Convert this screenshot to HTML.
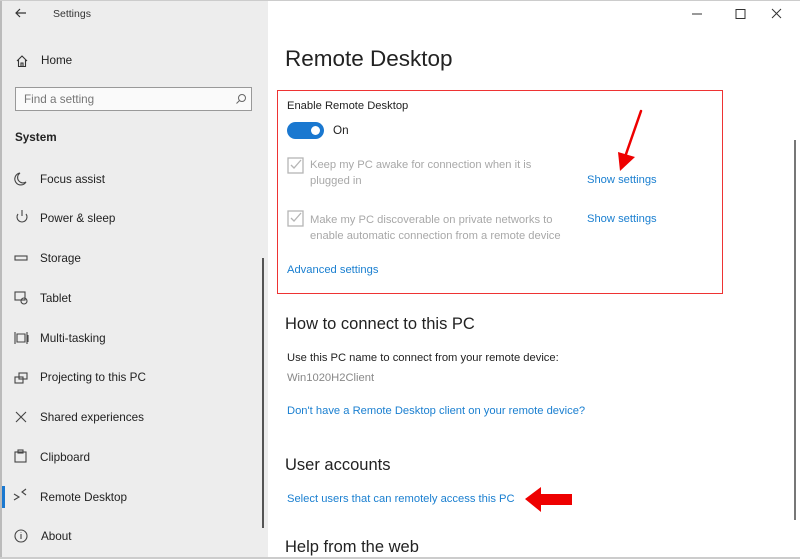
<!DOCTYPE html><html><head><style>
body{margin:0;width:800px;height:559px;overflow:hidden;background:#fff;font-family:"Liberation Sans",sans-serif;position:relative}
.a{position:absolute;white-space:nowrap}
#side{position:absolute;left:0;top:0;width:268px;height:559px;background:#ededed;border-left:2px solid #bbb;box-sizing:border-box}
.nav{font-size:11.7px;color:#222}
.blue{color:#1a7fd0;font-size:11.2px}
.grey{color:#a8a8a8;font-size:11.2px;line-height:16px}
.h{font-size:16.5px;color:#222}
svg{position:absolute}
</style></head><body>
<div id="side"></div>
<div style="position:absolute;left:0;top:0;width:800px;height:1px;background:#ccc"></div>
<div style="position:absolute;left:0;top:557px;width:800px;height:2px;background:#ccc"></div>
<svg style="left:14px;top:7px" width="14" height="12"><path d="M12 6H2M6 2L2 6l4 4" stroke="#333" fill="none" stroke-width="1.2"/></svg>
<div class="a" style="left:53px;top:8px;font-size:10.5px;color:#333">Settings</div>
<svg style="left:15px;top:54px" width="14" height="14"><path d="M2 7L7 2l5 5M3.5 6v6.5h7V6M6 12.5V9h2v3.5" stroke="#333" fill="none" stroke-width="1.1"/></svg>
<div class="a nav" style="left:41px;top:54px">Home</div>
<div style="position:absolute;left:15px;top:87px;width:237px;height:24px;border:1.5px solid #999;background:#fafafa;box-sizing:border-box"></div>
<div class="a" style="left:24px;top:93px;font-size:11.7px;color:#777">Find a setting</div>
<svg style="left:235px;top:93px" width="12" height="12"><circle cx="7" cy="5" r="3.5" stroke="#666" fill="none"/><path d="M4.5 7.5L1.5 10.5" stroke="#666"/></svg>
<div class="a" style="left:15px;top:131px;font-size:11.7px;font-weight:bold;color:#222">System</div>
<div class="a nav" style="left:40px;top:173px">Focus assist</div>
<div class="a nav" style="left:40px;top:212px">Power &amp; sleep</div>
<div class="a nav" style="left:40px;top:252px">Storage</div>
<div class="a nav" style="left:40px;top:292px">Tablet</div>
<div class="a nav" style="left:40px;top:332px">Multi-tasking</div>
<div class="a nav" style="left:40px;top:371px">Projecting to this PC</div>
<div class="a nav" style="left:40px;top:411px">Shared experiences</div>
<div class="a nav" style="left:40px;top:451px">Clipboard</div>
<div class="a nav" style="left:40px;top:491px">Remote Desktop</div>
<div class="a nav" style="left:41px;top:530px">About</div>
<svg style="left:13px;top:170px" width="18" height="380" fill="none" stroke="#444" stroke-width="1.1">
<path d="M7 3a6 6 0 1 0 6 9a5 5 0 0 1-6-9z"/>
<path d="M5 44a5 5 0 1 0 8 0M9 40v6"/>
<rect x="2" y="86" width="12" height="4"/>
<rect x="2" y="122" width="10" height="8"/><circle cx="11" cy="131" r="3"/>
<path d="M2 162v12M14 162v12M4 164h8v8H4zM15 165v7"/>
<rect x="2" y="207" width="8" height="6"/><rect x="6" y="203" width="8" height="6"/>
<path d="M3 242l10 10M13 242L3 252"/>
<rect x="2" y="282" width="11" height="10"/><rect x="5" y="280" width="5" height="3"/>
<path d="M1 324l5 3-5 3M13 319l-4 3 4 3"/>
<circle cx="8" cy="366" r="6"/><path d="M8 364v5M8 362v.5"/>
</svg>
<div style="position:absolute;left:2px;top:486px;width:3px;height:22px;background:#1a78d0"></div>
<div style="position:absolute;left:262px;top:258px;width:2px;height:270px;background:#555"></div>
<div style="position:absolute;left:794px;top:140px;width:2px;height:380px;background:#777"></div>
<svg style="left:690px;top:7px" width="100" height="14" stroke="#333" fill="none"><path d="M2 7h10"/><rect x="46" y="2.5" width="9" height="9"/><path d="M82 2l9 9M91 2l-9 9"/></svg>
<div class="a" style="left:285px;top:46px;font-size:22.5px;color:#222">Remote Desktop</div>
<div style="position:absolute;left:277px;top:90px;width:446px;height:204px;border:1.5px solid #e33;box-sizing:border-box"></div>
<div class="a" style="left:287px;top:100px;font-size:11.2px;color:#222">Enable Remote Desktop</div>
<div style="position:absolute;left:287px;top:122px;width:37px;height:17px;border-radius:9px;background:#1a78d0"></div>
<div style="position:absolute;left:311px;top:126px;width:9px;height:9px;border-radius:50%;background:#fff"></div>
<div class="a" style="left:333px;top:124px;font-size:11.7px;color:#222">On</div>
<svg style="left:287px;top:157px" width="18" height="70" fill="none" stroke="#b5b5b5" stroke-width="1.3"><rect x="1" y="1" width="15" height="15"/><path d="M4 8l3 3 7-8"/><rect x="1" y="54" width="15" height="15"/><path d="M4 61l3 3 7-8"/></svg>
<div class="a grey" style="left:310px;top:157px">Keep my PC awake for connection when it is<br>plugged in</div>
<div class="a grey" style="left:310px;top:212px">Make my PC discoverable on private networks to<br>enable automatic connection from a remote device</div>
<div class="a blue" style="left:587px;top:174px">Show settings</div>
<div class="a blue" style="left:587px;top:213px">Show settings</div>
<div class="a blue" style="left:287px;top:264px">Advanced settings</div>
<svg style="left:610px;top:105px" width="40" height="70"><path d="M31 6L15 52" stroke="#e00" stroke-width="2.5" stroke-linecap="round"/><path d="M8 47l17 5-15 14z" fill="#e00"/></svg>
<div class="a h" style="left:285px;top:315px">How to connect to this PC</div>
<div class="a" style="left:287px;top:352px;font-size:11.2px;color:#222">Use this PC name to connect from your remote device:</div>
<div class="a" style="left:287px;top:372px;font-size:11.2px;color:#888">Win1020H2Client</div>
<div class="a blue" style="left:287px;top:405px">Don't have a Remote Desktop client on your remote device?</div>
<div class="a h" style="left:285px;top:456px">User accounts</div>
<div class="a blue" style="left:287px;top:493px">Select users that can remotely access this PC</div>
<svg style="left:524px;top:486px" width="50" height="30"><path d="M1 13L17 1v7h31v11H17v7z" fill="#e00"/></svg>
<div class="a h" style="left:285px;top:538px">Help from the web</div>
</body></html>
